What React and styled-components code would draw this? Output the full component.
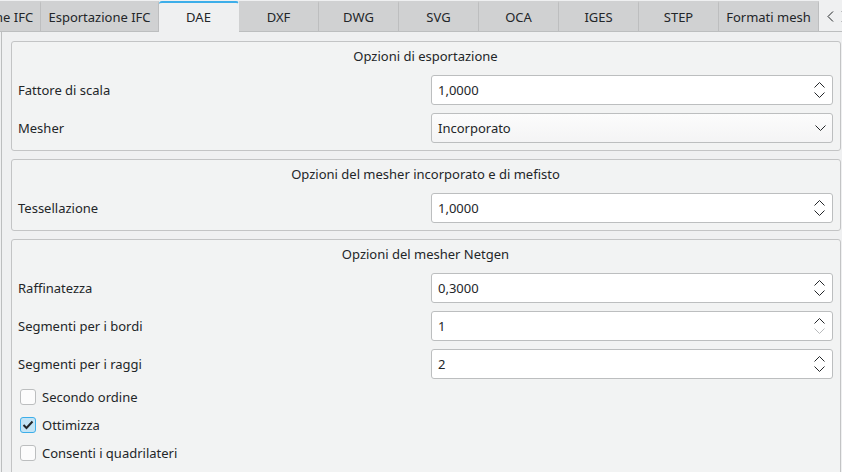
import React from 'react';
import styled, { createGlobalStyle } from 'styled-components';

const GlobalStyle = createGlobalStyle`
  html, body {
    margin: 0;
    padding: 0;
    background: #eff0f1;
  }
  * {
    box-sizing: border-box;
  }
`;

const Window = styled.div`
  width: 842px;
  height: 472px;
  overflow: hidden;
  background: #eff0f1;
  font-family: "Noto Sans", "Open Sans", sans-serif;
  font-size: 13px;
  color: #232629;
  display: flex;
  flex-direction: column;
`;

const TabBar = styled.div`
  display: flex;
  height: 32px;
  padding-top: 1px;
  flex: none;
`;

const Tab = styled.div`
  flex: none;
  width: ${(p) => p.$w}px;
  margin-left: ${(p) => p.$shift || 0}px;
  display: flex;
  align-items: center;
  justify-content: center;
  white-space: nowrap;
  background: ${(p) => (p.$active ? '#eff0f1' : '#d0d1d2')};
  border-right: 1px solid ${(p) => (p.$active ? 'transparent' : '#bdbebf')};
  border-top: 2px solid ${(p) => (p.$active ? '#3daee9' : 'transparent')};
  border-bottom: 1px solid ${(p) => (p.$active ? 'transparent' : '#bcbebf')};
  border-radius: ${(p) => (p.$active ? '3px 3px 0 0' : '0')};
  padding-bottom: 1px;
`;

const Scroller = styled.div`
  flex: none;
  width: 40px;
  display: flex;
  align-items: center;
  gap: 7px;
  padding-left: 8px;
  border-bottom: 1px solid #bcbebf;
  color: #232629;
`;

const Pane = styled.div`
  flex: 1;
  margin-left: 1px;
  width: 858px;
  border-left: 1px solid #bcbebf;
  padding: 9px 9px 0 9px;
  display: flex;
  flex-direction: column;
  gap: 8px;
`;

const Group = styled.div`
  width: 830px;
  flex: none;
  border: 1px solid #c3c4c5;
  border-radius: 3px;
  background: #f2f3f3;
  padding: 0 7px 7px 6px;
  display: flex;
  flex-direction: column;
`;

const GroupTitle = styled.div`
  height: 27px;
  display: flex;
  align-items: center;
  justify-content: center;
`;

const FieldRow = styled.div`
  display: grid;
  grid-template-columns: 1fr 402px;
  align-items: center;
  height: 30px;
  margin-top: ${(p) => p.$top ?? 8}px;
`;

const Input = styled.div`
  height: 30px;
  border: 1px solid #bcbebf;
  border-radius: 3px;
  background: ${(p) => (p.$combo ? 'linear-gradient(#fcfcfc, #f4f4f5)' : '#ffffff')};
  display: flex;
  align-items: center;
  padding: 0 6px 0 6px;
`;

const Value = styled.span`
  flex: 1;
`;

const Arrows = styled.div`
  display: flex;
  flex-direction: column;
  gap: 4px;
  margin-right: 1px;
`;

const CheckList = styled.div`
  display: flex;
  flex-direction: column;
  margin-top: 4px;
`;

const CheckRow = styled.label`
  display: flex;
  align-items: center;
  gap: 6px;
  height: 28px;
  padding-left: 2px;
`;

const Box = styled.span`
  width: 16px;
  height: 16px;
  border: 1px solid ${(p) => (p.$checked ? '#3daee9' : '#bcbebf')};
  border-radius: 3px;
  background: ${(p) => (p.$checked ? '#c4e4f5' : '#fcfcfc')};
  display: flex;
  align-items: center;
  justify-content: center;
`;

const Chevron = ({ up, dim }) => (
  <svg width="11" height="6" viewBox="0 0 11 6">
    <path
      d={up ? 'M0.5 5.5 L5.5 0.5 L10.5 5.5' : 'M0.5 0.5 L5.5 5.5 L10.5 0.5'}
      fill="none"
      stroke={dim ? '#b8babc' : '#232629'}
      strokeWidth="1"
    />
  </svg>
);

const SpinBox = ({ value, downDisabled }) => (
  <Input>
    <Value>{value}</Value>
    <Arrows>
      <Chevron up />
      <Chevron dim={downDisabled} />
    </Arrows>
  </Input>
);

const ComboBox = ({ value }) => (
  <Input $combo>
    <Value>{value}</Value>
    <Chevron />
  </Input>
);

const Check = ({ checked, children }) => (
  <CheckRow>
    <Box $checked={checked}>
      {checked && (
        <svg width="12" height="10" viewBox="0 0 12 10">
          <path d="M1.5 5 L4.5 8 L10.5 1.5" fill="none" stroke="#232629" strokeWidth="2" />
        </svg>
      )}
    </Box>
    {children}
  </CheckRow>
);

const tabs = [
  { label: 'Importazione IFC', w: 120, shift: -79 },
  { label: 'Esportazione IFC', w: 118 },
  { label: 'DAE', w: 80, active: true },
  { label: 'DXF', w: 80 },
  { label: 'DWG', w: 80 },
  { label: 'SVG', w: 80 },
  { label: 'OCA', w: 80 },
  { label: 'IGES', w: 80 },
  { label: 'STEP', w: 80 },
  { label: 'Formati mesh', w: 100 },
];

export default function App() {
  return (
    <Window>
      <GlobalStyle />
      <TabBar>
        {tabs.map((t) => (
          <Tab key={t.label} $w={t.w} $shift={t.shift} $active={t.active}>
            {t.label}
          </Tab>
        ))}
        <Scroller>
          <svg width="7" height="11" viewBox="0 0 7 11">
            <path d="M6 0.5 L1 5.5 L6 10.5" fill="none" stroke="#232629" strokeWidth="1" />
          </svg>
          <svg width="7" height="11" viewBox="0 0 7 11">
            <path d="M1 0.5 L6 5.5 L1 10.5" fill="none" stroke="#232629" strokeWidth="1" />
          </svg>
        </Scroller>
      </TabBar>
      <Pane>
        <Group>
          <GroupTitle>Opzioni di esportazione</GroupTitle>
          <FieldRow $top={6}>
            <span>Fattore di scala</span>
            <SpinBox value="1,0000" />
          </FieldRow>
          <FieldRow>
            <span>Mesher</span>
            <ComboBox value="Incorporato" />
          </FieldRow>
        </Group>
        <Group>
          <GroupTitle>Opzioni del mesher incorporato e di mefisto</GroupTitle>
          <FieldRow $top={6}>
            <span>Tessellazione</span>
            <SpinBox value="1,0000" />
          </FieldRow>
        </Group>
        <Group>
          <GroupTitle>Opzioni del mesher Netgen</GroupTitle>
          <FieldRow $top={6}>
            <span>Raffinatezza</span>
            <SpinBox value="0,3000" />
          </FieldRow>
          <FieldRow>
            <span>Segmenti per i bordi</span>
            <SpinBox value="1" downDisabled />
          </FieldRow>
          <FieldRow>
            <span>Segmenti per i raggi</span>
            <SpinBox value="2" />
          </FieldRow>
          <CheckList>
            <Check>Secondo ordine</Check>
            <Check checked>Ottimizza</Check>
            <Check>Consenti i quadrilateri</Check>
          </CheckList>
        </Group>
      </Pane>
    </Window>
  );
}
